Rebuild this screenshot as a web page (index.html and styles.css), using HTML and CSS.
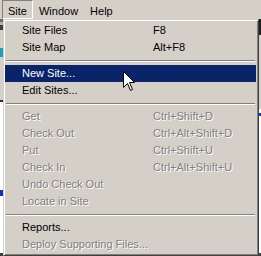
FILE: index.html
```html
<!DOCTYPE html>
<html lang="en">
<head>
  <meta charset="UTF-8">
  <title>Site Menu</title>
  <link rel="stylesheet" href="styles.css">
</head>
<body>
  <div class="menubar">
    <span class="menu-title active">Site</span>
    <span class="menu-title">Window</span>
    <span class="menu-title">Help</span>
  </div>

  <div class="workarea">
    <div class="edge-left"></div>

    <ul class="dropdown">
      <li class="item"><span class="label">Site Files</span><span class="key">F8</span></li>
      <li class="item"><span class="label">Site Map</span><span class="key">Alt+F8</span></li>
      <li class="separator"></li>
      <li class="item selected"><span class="label">New Site...</span></li>
      <li class="item"><span class="label">Edit Sites...</span></li>
      <li class="separator"></li>
      <li class="item disabled"><span class="label">Get</span><span class="key">Ctrl+Shift+D</span></li>
      <li class="item disabled"><span class="label">Check Out</span><span class="key">Ctrl+Alt+Shift+D</span></li>
      <li class="item disabled"><span class="label">Put</span><span class="key">Ctrl+Shift+U</span></li>
      <li class="item disabled"><span class="label">Check In</span><span class="key">Ctrl+Alt+Shift+U</span></li>
      <li class="item disabled"><span class="label">Undo Check Out</span></li>
      <li class="item disabled"><span class="label">Locate in Site</span></li>
      <li class="separator"></li>
      <li class="item"><span class="label">Reports...</span></li>
      <li class="item disabled"><span class="label">Deploy Supporting Files...</span></li>
    </ul>

    <div class="edge-right"></div>
  </div>

  <svg class="cursor" width="13" height="21" viewBox="0 0 13 21">
    <polygon points="0.5,0.5 0.5,16.5 4.5,12.5 7.5,19.5 9.5,18.5 6.5,11.5 11.5,11.5" fill="#fff" stroke="#000" stroke-width="1"/>
  </svg>
</body>
</html>
```

FILE: styles.css
```css
body {
  margin: 0;
  width: 261px;
  height: 256px;
  overflow: hidden;
  position: relative;
  background-color: #d4d0c8;
  font-family: "Liberation Sans", Arial, sans-serif;
  font-size: 11px;
  color: #000;
}

.menubar {
  display: flex;
  height: 19px;
  padding-left: 2px;
}

.menu-title {
  padding: 3px 5px 0 5px;
  line-height: 14px;
  border: 1px solid transparent;
}

.menu-title.active {
  border-color: #808080 #fff #fff #808080;
}

.workarea {
  display: flex;
  height: 237px;
}

.edge-left {
  width: 3px;
  background:
    linear-gradient(to bottom,
      #6b6b6b 0, #6b6b6b 3px, #b0b0b0 3px, #b0b0b0 6px, #404040 6px, #404040 11px,
      #d4d0c8 11px, #d4d0c8 29px, #1aa0b8 29px, #1aa0b8 38px,
      #d4d0c8 38px, #d4d0c8 81px, #303030 81px, #303030 83px,
      #fff 83px, #fff 171px, #1030c0 171px, #1030c0 177px,
      #fff 177px, #fff 234px, #404040 234px);
}

.edge-right {
  width: 2px;
  background:
    linear-gradient(to bottom,
      #202020 0, #202020 16px, #d4d0c8 16px, #d4d0c8 90px,
      #fff 90px, #fff 94px, #1030c0 94px, #1030c0 97px,
      #fff 97px, #fff 234px, #404040 234px);
}

.dropdown {
  list-style: none;
  margin: 0;
  width: 256px;
  box-sizing: border-box;
  padding: 2px 2px 2px 1px;
  border: 1px solid;
  border-color: #d4d0c8 #404040 #404040 #d4d0c8;
  box-shadow: inset 1px 1px 0 #fff, inset -1px -1px 0 #808080;
}

.item {
  display: flex;
  height: 17px;
  line-height: 17px;
  padding-left: 17px;
  white-space: nowrap;
}

.item .label {
  width: 131px;
  flex-shrink: 0;
}

.item.selected {
  background-color: #0a246a;
  color: #fff;
}

.item.disabled {
  color: #808080;
  text-shadow: 1px 1px 0 #fff;
}

.separator {
  height: 0;
  margin: 4px 1px 3px 1px;
  border-top: 1px solid #808080;
  border-bottom: 1px solid #fff;
}

.cursor {
  position: absolute;
  left: 123px;
  top: 71px;
}
```
